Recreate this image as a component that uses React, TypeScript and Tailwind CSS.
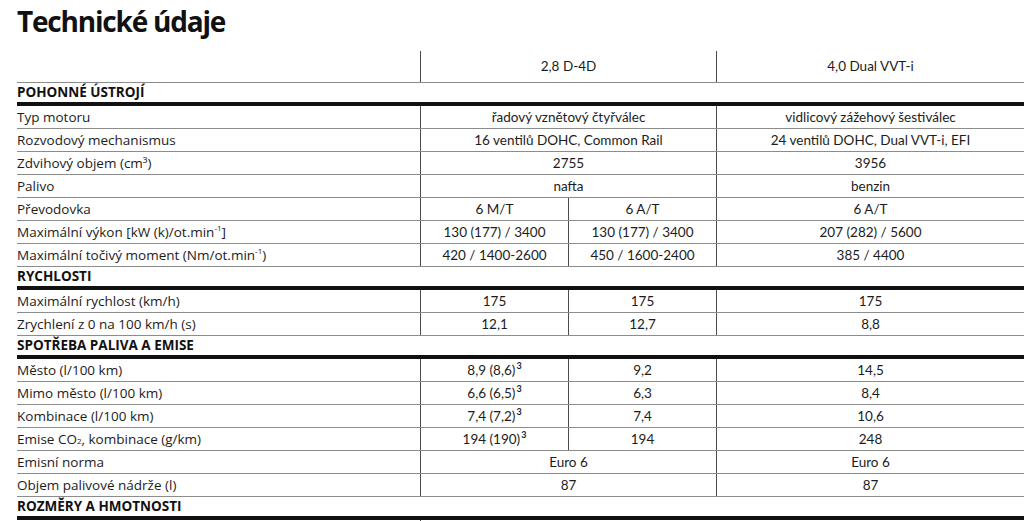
import React from 'react';

type Row =
  | { kind: 'section'; title: string }
  | { kind: 'data'; label: React.ReactNode; cells: React.ReactNode[] };

const Sup3 = () => <sup className="text-[9px] font-bold ml-[1px]">3</sup>;

const rows: Row[] = [
  { kind: 'section', title: 'POHONNÉ ÚSTROJÍ' },
  { kind: 'data', label: 'Typ motoru', cells: ['řadový vznětový čtyřválec', 'vidlicový zážehový šestiválec'] },
  { kind: 'data', label: 'Rozvodový mechanismus', cells: ['16 ventilů DOHC, Common Rail', '24 ventilů DOHC, Dual VVT-i, EFI'] },
  { kind: 'data', label: 'Zdvihový objem (cm³)', cells: ['2755', '3956'] },
  { kind: 'data', label: 'Palivo', cells: ['nafta', 'benzin'] },
  { kind: 'data', label: 'Převodovka', cells: ['6 M/T', '6 A/T', '6 A/T'] },
  {
    kind: 'data',
    label: (
      <>
        Maximální výkon [kW (k)/ot.min<sup className="text-[8px]">-1</sup>]
      </>
    ),
    cells: ['130 (177) / 3400', '130 (177) / 3400', '207 (282) / 5600'],
  },
  {
    kind: 'data',
    label: (
      <>
        Maximální točivý moment (Nm/ot.min<sup className="text-[8px]">-1</sup>)
      </>
    ),
    cells: ['420 / 1400-2600', '450 / 1600-2400', '385 / 4400'],
  },
  { kind: 'section', title: 'RYCHLOSTI' },
  { kind: 'data', label: 'Maximální rychlost (km/h)', cells: ['175', '175', '175'] },
  { kind: 'data', label: 'Zrychlení z 0 na 100 km/h (s)', cells: ['12,1', '12,7', '8,8'] },
  { kind: 'section', title: 'SPOTŘEBA PALIVA A EMISE' },
  { kind: 'data', label: 'Město (l/100 km)', cells: [<>8,9 (8,6)<Sup3 /></>, '9,2', '14,5'] },
  { kind: 'data', label: 'Mimo město (l/100 km)', cells: [<>6,6 (6,5)<Sup3 /></>, '6,3', '8,4'] },
  { kind: 'data', label: 'Kombinace (l/100 km)', cells: [<>7,4 (7,2)<Sup3 /></>, '7,4', '10,6'] },
  {
    kind: 'data',
    label: (
      <>
        Emise CO<sub className="text-[8px]">2</sub>, kombinace (g/km)
      </>
    ),
    cells: [<>194 (190)<Sup3 /></>, '194', '248'],
  },
  { kind: 'data', label: 'Emisní norma', cells: ['Euro 6', 'Euro 6'] },
  { kind: 'data', label: 'Objem palivové nádrže (l)', cells: ['87', '87'] },
  { kind: 'section', title: 'ROZMĚRY A HMOTNOSTI' },
];

const grid = 'grid grid-cols-[403px_148px_148px_1fr]';
const valueCell =
  "flex items-center justify-center border-l border-[#4a4a4a] font-['Lato',sans-serif] text-[13.5px] text-[#1c1c1c]";

const DataRow: React.FC<{ label: React.ReactNode; cells: React.ReactNode[] }> = ({ label, cells }) => (
  <div className={`${grid} h-[23px] border-b border-[#8c8c8c]`}>
    <div className="flex items-center text-[13.5px] text-[#1c1c1c] whitespace-nowrap">{label}</div>
    {cells.length === 2 ? (
      <>
        <div className={`${valueCell} col-span-2`}>{cells[0]}</div>
        <div className={valueCell}>{cells[1]}</div>
      </>
    ) : (
      cells.map((c, i) => (
        <div key={i} className={valueCell}>
          {c}
        </div>
      ))
    )}
  </div>
);

export default function App() {
  return (
    <div className="w-[1024px] h-[521px] overflow-hidden bg-white font-['Open_Sans',sans-serif] pl-[17px]">
      <div className="h-[51px] pt-[2px]">
        <h1 className="text-[28px] leading-[38px] font-bold tracking-[-1.2px] text-[#111]">Technické údaje</h1>
      </div>

      <div className={`${grid} h-[32px] border-b border-[#8c8c8c]`}>
        <div />
        <div className={`${valueCell} col-span-2`}>2,8 D-4D</div>
        <div className={valueCell}>4,0 Dual VVT-i</div>
      </div>

      {rows.map((r, i) =>
        r.kind === 'section' ? (
          <div key={i} className="h-[23px] flex items-center border-b-4 border-[#111] text-[13.5px] font-bold text-[#111]">
            {r.title}
          </div>
        ) : (
          <DataRow key={i} label={r.label} cells={r.cells} />
        )
      )}

      <div className={`${grid} h-[10px]`}>
        <div />
        <div className="border-l border-[#4a4a4a] col-span-3" />
      </div>
    </div>
  );
}
